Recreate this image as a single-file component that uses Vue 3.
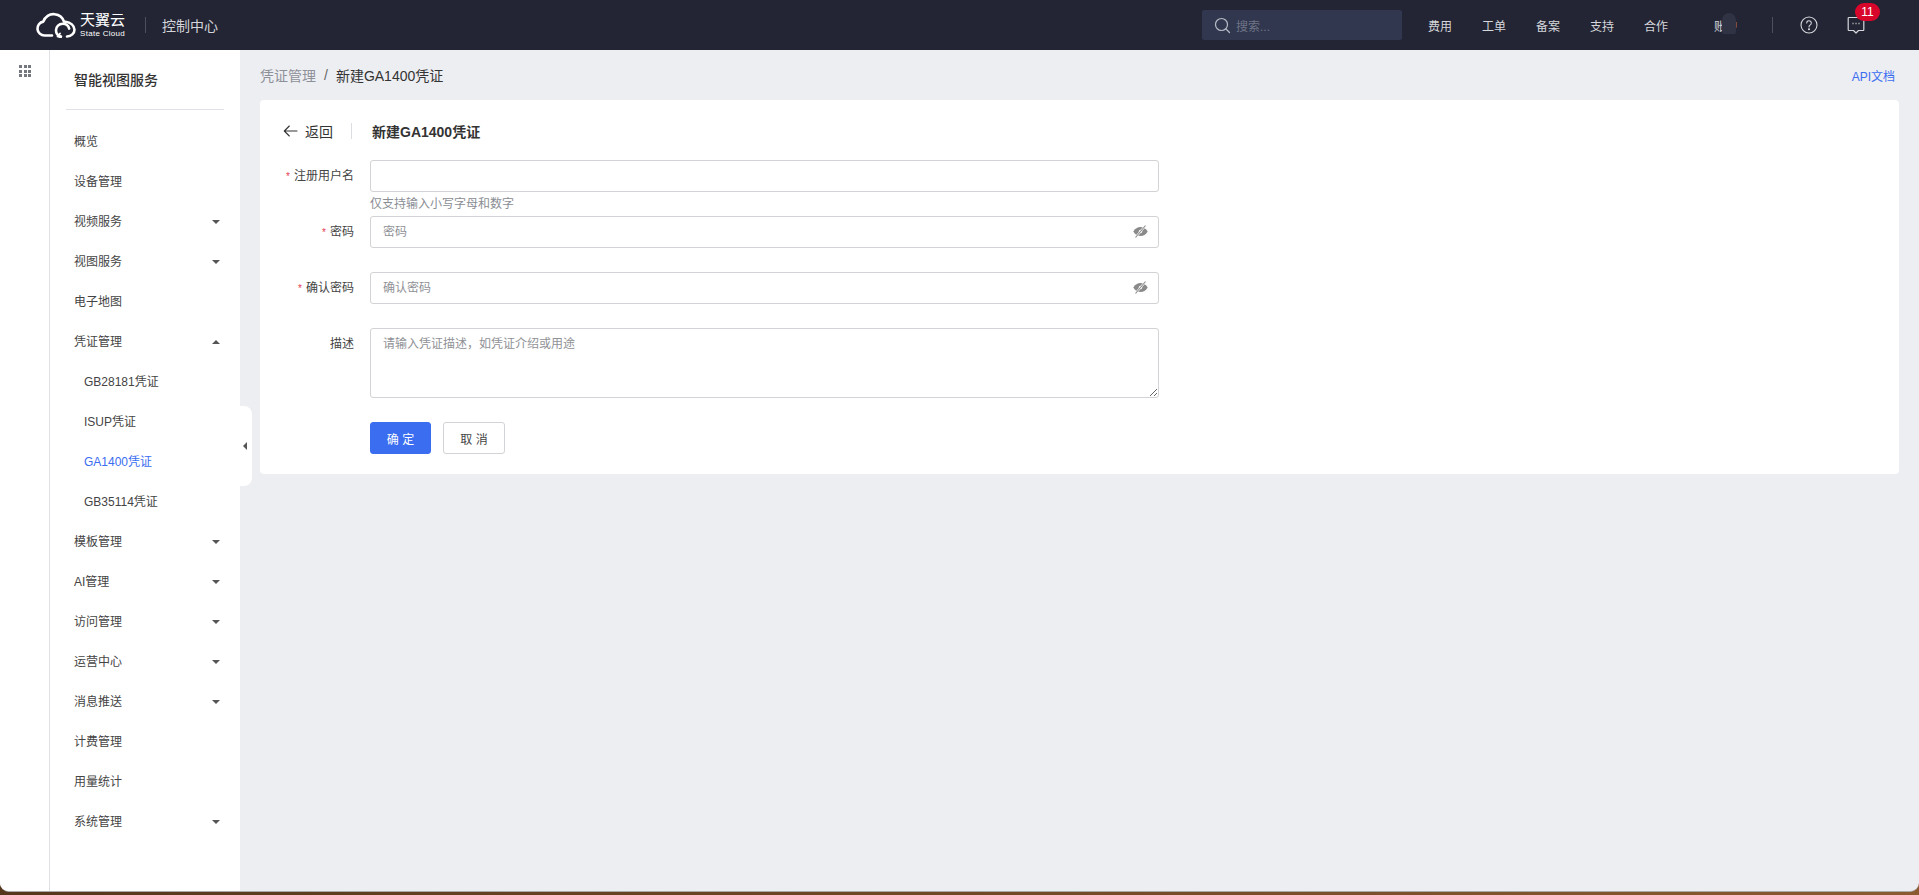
<script setup>
const menu = [
  { label: '概览' },
  { label: '设备管理' },
  { label: '视频服务', caret: 'down' },
  { label: '视图服务', caret: 'down' },
  { label: '电子地图' },
  { label: '凭证管理', caret: 'up' },
  { label: 'GB28181凭证', sub: true },
  { label: 'ISUP凭证', sub: true },
  { label: 'GA1400凭证', sub: true, active: true },
  { label: 'GB35114凭证', sub: true },
  { label: '模板管理', caret: 'down' },
  { label: 'AI管理', caret: 'down' },
  { label: '访问管理', caret: 'down' },
  { label: '运营中心', caret: 'down' },
  { label: '消息推送', caret: 'down' },
  { label: '计费管理' },
  { label: '用量统计' },
  { label: '系统管理', caret: 'down' }
]
const navs = ['费用', '工单', '备案', '支持', '合作']
</script>

<template>
  <div class="window">
    <div class="screen">
      <header class="topbar">
        <div class="brand">
          <svg class="cloud" width="42" height="26" viewBox="0 0 42 26" fill="none" stroke="#fff" stroke-width="2.6" stroke-linecap="round" stroke-linejoin="round">
            <path d="M17 23.5H9.5a7 7 0 0 1-1.2-13.9C10 4.6 14.6 1.6 19.6 2.2c4.6.5 8.200 3.500 9.400 7.500" />
            <path d="M26 24.400c-3-.7-5-3.200-5-6.200 0-3.600 3-6.500 6.700-6.500 3.200 0 5.800 2.100 6.500 4.900" />
            <path d="M30.500 9.800c5 .4 9 3.800 9 8 0 3.500-3.200 6.400-7.500 6.700" />
            <path d="M25 21.500l-2.500 3 3.500 1" stroke-width="1.800" />
          </svg>
          <div class="brand-text">
            <span class="brand-cn">天翼云</span>
            <span class="brand-en">State Cloud</span>
          </div>
          <i class="bar-divider"></i>
          <span class="console">控制中心</span>
        </div>
        <div class="top-right">
          <div class="search">
            <svg width="17" height="17" viewBox="0 0 17 17" fill="none" stroke="#b9bcc6" stroke-width="1.200" stroke-linecap="round">
              <circle cx="7.500" cy="7.500" r="6" />
              <path d="M12 12l3.500 3.500" />
            </svg>
            <span>搜索...</span>
          </div>
          <nav class="nav">
            <a v-for="n in navs" :key="n">{{ n }}</a>
          </nav>
          <div class="account"><span>账户</span><i class="blob"></i></div>
          <i class="bar-divider right-divider"></i>
          <svg class="help" width="18" height="18" viewBox="0 0 18 18" fill="none" stroke="#d6d7dc" stroke-width="1.100" stroke-linecap="round">
            <circle cx="9" cy="9" r="8" />
            <path d="M6.700 7a2.300 2.300 0 1 1 3.600 1.900c-.8.500-1.300 1-1.300 2" />
            <circle cx="9" cy="13.300" r=".5" fill="#d6d7dc" />
          </svg>
          <div class="msg">
            <svg width="18" height="18" viewBox="0 0 18 18" fill="none" stroke="#d6d7dc" stroke-width="1.200" stroke-linejoin="round">
              <path d="M2 1.500h14a.8.8 0 0 1 .8.800v11.400a.8.8 0 0 1-.8.800h-4.500L9 17l-2.500-2.500H2a.8.800 0 0 1-.8-.8V2.300a.8.800 0 0 1 .8-.8z" />
              <path d="M5.500 7.500h1M8.500 7.500h1M11.500 7.500h1" stroke-width="1.500" />
            </svg>
            <span class="badge">11</span>
          </div>
        </div>
      </header>

      <div class="body">
        <aside class="rail">
          <div class="grid-icon"><i v-for="k in 9" :key="k"></i></div>
        </aside>
        <aside class="side">
          <h2 class="side-title">智能视图服务</h2>
          <ul class="menu">
            <li v-for="m in menu" :key="m.label" :class="{ sub: m.sub, active: m.active }">
              <span>{{ m.label }}</span>
              <i v-if="m.caret" class="caret" :class="m.caret"></i>
            </li>
          </ul>
          <div class="collapse"><i></i></div>
        </aside>
        <main class="main">
          <div class="crumbs">
            <div class="crumb-path">
              <span class="crumb-muted">凭证管理</span>
              <span class="crumb-sep">/</span>
              <span>新建GA1400凭证</span>
            </div>
            <a class="api">API文档</a>
          </div>
          <section class="card">
            <div class="card-head">
              <svg width="15" height="12" viewBox="0 0 15 12" fill="none" stroke="#333" stroke-width="1.100" stroke-linecap="round" stroke-linejoin="round">
                <path d="M14 6H1.500M6.300 1L1.300 6l5 5" />
              </svg>
              <span class="back">返回</span>
              <i class="head-divider"></i>
              <strong>新建GA1400凭证</strong>
            </div>
            <form class="form" @submit.prevent>
              <div class="row tight">
                <label><em>*</em>注册用户名</label>
                <div class="field">
                  <input class="control" type="text" />
                  <p class="hint">仅支持输入小写字母和数字</p>
                </div>
              </div>
              <div class="row">
                <label><em>*</em>密码</label>
                <div class="field pwd">
                  <input class="control" type="text" placeholder="密码" />
                  <svg class="eye" width="15" height="13" viewBox="0 0 15 13">
                    <path d="M.3 6.500C2 3.500 4.500 2 7.500 2s5.500 1.500 7.200 4.500c-1.700 3-4.200 4.500-7.200 4.500S2 9.500.3 6.500z" fill="#8a8a8a" />
                    <circle cx="7.500" cy="6.500" r="1.700" fill="#fff" />
                    <path d="M2.500 12.500L12.500.5" stroke="#fff" stroke-width="2" />
                    <path d="M2.500 12.500L12.500.5" stroke="#8a8a8a" stroke-width="1.100" />
                  </svg>
                </div>
              </div>
              <div class="row">
                <label><em>*</em>确认密码</label>
                <div class="field pwd">
                  <input class="control" type="text" placeholder="确认密码" />
                  <svg class="eye" width="15" height="13" viewBox="0 0 15 13">
                    <path d="M.3 6.500C2 3.500 4.500 2 7.500 2s5.500 1.500 7.200 4.500c-1.700 3-4.200 4.500-7.200 4.500S2 9.500.3 6.500z" fill="#8a8a8a" />
                    <circle cx="7.500" cy="6.500" r="1.700" fill="#fff" />
                    <path d="M2.500 12.500L12.500.5" stroke="#fff" stroke-width="2" />
                    <path d="M2.500 12.500L12.500.5" stroke="#8a8a8a" stroke-width="1.100" />
                  </svg>
                </div>
              </div>
              <div class="row">
                <label>描述</label>
                <div class="field">
                  <textarea class="control area" placeholder="请输入凭证描述，如凭证介绍或用途"></textarea>
                </div>
              </div>
              <div class="row actions">
                <label></label>
                <button class="btn primary" type="button">确 定</button>
                <button class="btn" type="button">取 消</button>
              </div>
            </form>
          </section>
        </main>
      </div>
    </div>
  </div>
</template>

<style>
html, body { margin: 0; padding: 0; background: #6b4523; overflow: hidden; }
</style>

<style scoped>
* { box-sizing: border-box; }
.window {
  width: 1919px;
  height: 895px;
  overflow: hidden;
  background: linear-gradient(90deg, #55371c, #6b4523 40%, #8a5a30);
  font-family: "Liberation Sans", "Noto Sans CJK SC", sans-serif;
  font-size: 12px;
  color: #333;
}
.screen {
  height: 892px;
  display: flex;
  flex-direction: column;
  border-radius: 0 0 9px 9px;
  overflow: hidden;
  background: #edeef2;
  border-bottom: 1px solid #a9a9a9;
}
.topbar {
  flex: 0 0 50px;
  background: #232534;
  display: flex;
  align-items: center;
  justify-content: space-between;
}
.brand { display: flex; align-items: center; padding-left: 35px; }
.cloud { flex: none; }
.brand-text { display: flex; flex-direction: column; margin-left: 3px; color: #fff; width: 46px; }
.brand-cn { font-size: 15px; line-height: 17px; white-space: nowrap; }
.brand-en { font-size: 8px; line-height: 10px; white-space: nowrap; margin-top: 1px; letter-spacing: .3px; }
.bar-divider { width: 1px; height: 16px; background: #4d4f5d; display: block; }
.brand .bar-divider { margin-left: 19px; }
.console { margin-left: 16px; font-size: 14px; color: #d4d5da; }
.top-right { display: flex; align-items: center; height: 100%; padding-right: 54px; }
.search {
  width: 200px;
  height: 30px;
  background: #30374f;
  border-radius: 2px;
  display: flex;
  align-items: center;
  padding-left: 12px;
  gap: 5px;
  color: #6f7486;
}
.nav { display: flex; gap: 30px; margin-left: 26px; color: #d6d7dc; }
.nav a { width: 24px; white-space: nowrap; }
.account { position: relative; margin-left: 46px; color: #d6d7dc; width: 27px; white-space: nowrap; }
.blob {
  position: absolute;
  left: 8px;
  top: -4px;
  width: 14px;
  height: 21px;
  border-radius: 7px 7px 2px 2px;
  background: #2f3343;
}
.right-divider { margin-left: 31px; }
.help { margin-left: 27px; }
.msg { position: relative; margin-left: 29px; width: 18px; height: 18px; }
.badge {
  position: absolute;
  left: 8px;
  top: -13px;
  width: 25px;
  height: 18px;
  border-radius: 9px;
  background: #d9062b;
  color: #fff;
  font-size: 12px;
  line-height: 18px;
  text-align: center;
}
.body { flex: 1; display: flex; min-height: 0; }
.rail { flex: 0 0 50px; background: #fff; border-right: 1px solid #dfe1e6; padding: 15px 0 0 19px; }
.grid-icon { display: grid; grid-template-columns: repeat(3, 3px); gap: 1.500px; }
.grid-icon i { width: 3px; height: 3px; background: #75777f; display: block; }
.side { position: relative; flex: 0 0 190px; background: #fff; padding: 0 16px; }
.side-title {
  margin: 0;
  height: 60px;
  line-height: 60px;
  font-size: 14px;
  font-weight: 500;
  color: #333;
  padding-left: 8px;
  border-bottom: 1px solid #dfe1e6;
  width: 158px;
}
.menu { list-style: none; margin: 10px 0 0; padding: 0; }
.menu li {
  height: 40px;
  display: flex;
  align-items: center;
  justify-content: space-between;
  padding: 0 4px 0 8px;
  color: #444;
}
.menu li.sub { padding-left: 18px; }
.menu li.active { color: #3a6df0; }
.caret { width: 0; height: 0; border-left: 4.500px solid transparent; border-right: 4.500px solid transparent; margin-top: 3px; }
.caret.down { border-top: 4.500px solid #555; }
.caret.up { border-bottom: 4.500px solid #555; }
.collapse {
  position: absolute;
  right: -12px;
  top: 356px;
  width: 12px;
  height: 80px;
  background: #fff;
  border-radius: 0 8px 8px 0;
  display: flex;
  align-items: center;
  z-index: 2;
}
.collapse i { width: 0; height: 0; margin-left: 2.500px; border-top: 4px solid transparent; border-bottom: 4px solid transparent; border-right: 4px solid #555; }
.main { flex: 1; min-width: 0; padding: 0 20px; }
.crumbs { height: 50px; display: flex; align-items: center; justify-content: space-between; font-size: 14px; }
.crumb-path { display: flex; align-items: center; color: #333; }
.crumb-muted { color: #8d9099; }
.crumb-sep { margin: 0 8px; color: #666; }
.api { font-size: 12px; color: #3a6df0; margin-right: 4px; }
.card { background: #fff; border-radius: 4px; height: 374px; padding: 0 0 0 23px; }
.card-head { height: 60px; padding-top: 2px; display: flex; align-items: center; font-size: 14px; }
.back { margin-left: 7px; color: #333; }
.head-divider { width: 1px; height: 16px; background: #dcdde1; margin: 0 20px 0 18px; display: block; }
.card-head strong { font-size: 14px; font-weight: 600; color: #333; }
.form { display: flex; flex-direction: column; gap: 24px; }
.row { display: flex; align-items: flex-start; }
.row.tight { margin-bottom: -24px; }
.row label {
  flex: 0 0 71px;
  width: 71px;
  height: 32px;
  margin-right: 16px;
  text-align: right;
  line-height: 32px;
  color: #444;
  white-space: nowrap;
  direction: rtl;
  unicode-bidi: plaintext;
}
.row label em { color: #e5404f; font-style: normal; margin-right: 4px; font-size: 10px; }
.field { position: relative; width: 789px; flex: none; }
.control {
  display: block;
  width: 100%;
  height: 32px;
  border: 1px solid #d2d3d6;
  border-radius: 3px;
  padding: 0 12px;
  font: inherit;
  font-size: 12px;
  color: #333;
  background: #fff;
  outline: none;
}
.control::placeholder { color: #8f9196; opacity: 1; }
.area { height: 70px; padding: 7px 12px; line-height: 16px; resize: vertical; }
.hint { margin: 0; height: 24px; line-height: 24px; color: #8a8d94; }
.eye { position: absolute; right: 11px; top: 9px; }
.actions { align-items: center; }
.btn {
  width: 62px;
  height: 32px;
  border: 1px solid #d2d3d6;
  border-radius: 3px;
  background: #fff;
  color: #444;
  font: inherit;
  font-size: 12px;
  padding: 0;
  margin-right: 12px;
}
.btn.primary { width: 61px; background: #3a6df0; border-color: #3a6df0; color: #fff; }
</style>
